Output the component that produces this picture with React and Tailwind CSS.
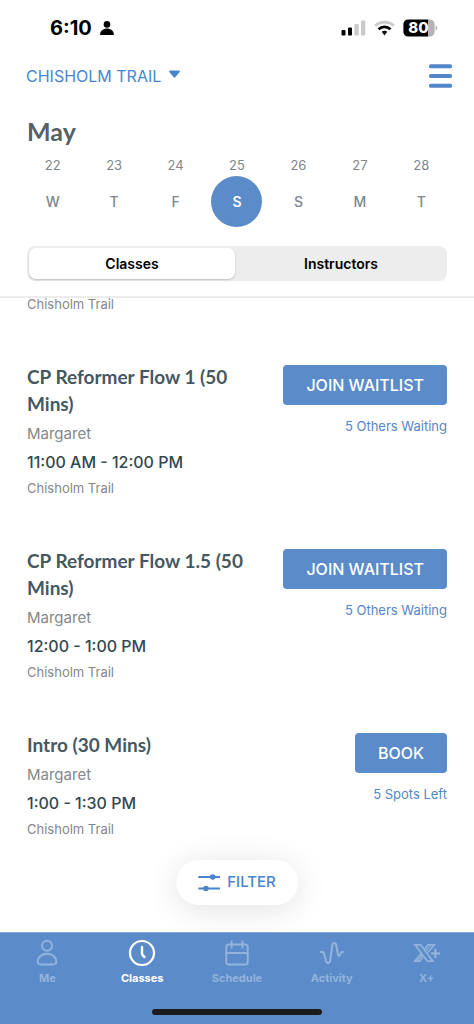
import React, { useState } from "react";

const days = [
  { date: 22, day: "W" },
  { date: 23, day: "T" },
  { date: 24, day: "F" },
  { date: 25, day: "S" },
  { date: 26, day: "S" },
  { date: 27, day: "M" },
  { date: 28, day: "T" },
];

const classes = [
  {
    title: "CP Reformer Flow 1 (50 Mins)",
    instructor: "Margaret",
    time: "11:00 AM - 12:00 PM",
    action: "JOIN WAITLIST",
    note: "5 Others Waiting",
  },
  {
    title: "CP Reformer Flow 1.5 (50 Mins)",
    instructor: "Margaret",
    time: "12:00 - 1:00 PM",
    action: "JOIN WAITLIST",
    note: "5 Others Waiting",
  },
  {
    title: "Intro (30 Mins)",
    instructor: "Margaret",
    time: "1:00 - 1:30 PM",
    action: "BOOK",
    note: "5 Spots Left",
  },
];

function StatusBar() {
  return (
    <div className="flex h-14 items-center justify-between pl-[50px] pr-9 text-black">
      <div className="flex items-center gap-2">
        <span className="text-[20px] leading-6 font-bold">6:10</span>
        <svg width="14" height="14" viewBox="0 0 14 14" fill="currentColor" aria-hidden="true">
          <circle cx="7" cy="3.4" r="3.3" />
          <path d="M1 14c-.7 0-1-.4-.9-1.100C.5 9.900 3.300 7.600 7 7.600s6.500 2.300 6.900 5.300c.1.700-.2 1.100-.9 1.100z" />
        </svg>
      </div>
      <div className="flex items-center gap-2">
        <svg width="25" height="16" viewBox="0 0 25 16" aria-hidden="true">
          <rect x="0.500" y="10" width="4" height="5.500" rx="1" />
          <rect x="7" y="7.500" width="4" height="8" rx="1" />
          <rect x="13.500" y="4" width="4.200" height="11.500" rx="1" fill="#cacaca" />
          <rect x="20" y="0.500" width="4.300" height="15" rx="1" fill="#cacaca" />
        </svg>
        <svg width="21" height="16" viewBox="0 0 21 16" fill="none" strokeWidth="2.700" aria-hidden="true">
          <path d="M1.200 5.700C6.400.900 14.600.900 19.800 5.700" stroke="#cacaca" />
          <path d="M4.500 9.300c3.400-3.200 8.600-3.200 12 0" stroke="#000" />
          <path d="M7.800 11.800c1.500-1.500 3.900-1.500 5.400 0L10.500 15.600z" fill="#000" />
        </svg>
        <svg width="35" height="18" viewBox="0 0 35 18" aria-hidden="true">
          <path d="M5 .500h20.300v17H5a4.600 4.600 0 0 1-4.600-4.600V5.100A4.600 4.600 0 0 1 5 .500z" />
          <path d="M25.300.500H27a4.600 4.600 0 0 1 4.600 4.600v7.800a4.600 4.600 0 0 1-4.600 4.600h-1.700z" fill="#b4b4b4" />
          <path d="M32.600 6.500c2.300 1 2.300 4 0 5z" fill="#b4b4b4" />
          <text x="15.500" y="14.400" textAnchor="middle" fontSize="15" fontWeight="800" fill="#fff">
            80
          </text>
        </svg>
      </div>
    </div>
  );
}

function WeekPicker({ selected, onSelect }) {
  return (
    <div className="grid grid-cols-7 px-[22px]">
      {days.map(({ date, day }) => (
        <button
          key={date}
          type="button"
          aria-pressed={selected === date}
          onClick={() => onSelect(date)}
          className="flex flex-col items-center gap-px text-[#80868c]"
        >
          <span className="text-[13px] leading-5">{date}</span>
          <span
            className={
              selected === date
                ? "flex size-[51px] items-center justify-center rounded-full bg-[#5b8cc9] text-[14px] font-semibold text-white"
                : "flex size-[51px] items-center justify-center text-[14px] font-medium"
            }
          >
            {day}
          </span>
        </button>
      ))}
    </div>
  );
}

function Segments({ value, onChange }) {
  return (
    <div className="mx-[27px] mt-[19px] grid h-[35px] grid-cols-[206fr_212fr] rounded-lg bg-[#ededee] py-[2px] pl-[2px]">
      {["Classes", "Instructors"].map((name) => (
        <button
          key={name}
          type="button"
          aria-pressed={value === name}
          onClick={() => onChange(name)}
          className={
            value === name
              ? "rounded-[7px] bg-white text-[14px] font-semibold text-black shadow-[0_1px_2px_rgba(0,0,0,0.2)]"
              : "rounded-[7px] text-[14px] font-semibold text-black"
          }
        >
          {name}
        </button>
      ))}
    </div>
  );
}

function ClassRow({ item }) {
  return (
    <li className="flex items-start justify-between">
      <div className="w-[230px]">
        <h2 className="font-['Lato'] text-[19px] leading-[27px] font-bold text-[#465860]">{item.title}</h2>
        <p className="mt-[3px] text-[15px] leading-7 text-[#84878c]">{item.instructor}</p>
        <p className="text-[16px] leading-7 font-medium text-[#334851]">{item.time}</p>
        <p className="text-[13px] leading-6 text-[#84878c]">Chisholm Trail</p>
      </div>
      <div className="mt-[2px] flex shrink-0 flex-col items-end gap-[11px]">
        <button type="button" className="h-10 rounded-[4px] bg-[#5b8cc9] px-[23px] text-[16px] font-medium text-white">
          {item.action}
        </button>
        <p className="text-[13px] leading-5 text-[#5586c6]">{item.note}</p>
      </div>
    </li>
  );
}

const iconProps = {
  width: 28,
  height: 28,
  viewBox: "0 0 28 28",
  fill: "none",
  stroke: "currentColor",
  strokeWidth: 2,
  strokeLinecap: "round",
  strokeLinejoin: "round",
  "aria-hidden": true,
};

const tabs = [
  {
    name: "Me",
    icon: (
      <svg {...iconProps}>
        <circle cx="14" cy="6.800" r="5" />
        <path d="M8 25.500c-2.300 0-3.500-1.200-3.300-3.300.400-4.500 4.500-7.500 9.300-7.500s8.900 3 9.300 7.500c.2 2.100-1 3.300-3.300 3.300z" />
      </svg>
    ),
  },
  {
    name: "Classes",
    icon: (
      <svg {...iconProps}>
        <circle cx="14" cy="14" r="12" strokeWidth="2.200" />
        <path d="M14 8v6.500c0 .8.300 1.400.9 2l1.600 1.500" strokeWidth="2.400" />
      </svg>
    ),
  },
  {
    name: "Schedule",
    icon: (
      <svg {...iconProps}>
        <rect x="3.300" y="5.500" width="21.400" height="20" rx="2.500" />
        <path d="M3.300 14h21.400M8.600 2.300v6.500M19.400 2.300v6.500" />
      </svg>
    ),
  },
  {
    name: "Activity",
    icon: (
      <svg {...iconProps}>
        <path d="M2.500 13h1.800c1 0 1.500.5 1.800 1.500l1.800 7.300c.8 3 3.600 3 4.200 0L14.300 6.300c.6-3 3.400-3 4 0l1.600 9c.400 2 1.600 2.200 2.400.4l.8-1.900c.3-.5.7-.8 1.300-.8h.8" />
      </svg>
    ),
  },
  {
    name: "X+",
    icon: (
      <svg {...iconProps} strokeWidth="1.700" strokeLinecap="butt" strokeLinejoin="miter">
        <path d="M2.200 5.800H7.700L19.900 22.200H14.400z" />
        <path d="M11.800 9.800 15 5.800h6.200L14.900 13.200M9.900 17.900 6.600 22.200H1.700L8 14.600" />
        <path d="M13 11.600 17.500 6.400M9 16 4.300 21.600" strokeWidth="1.200" />
        <path d="M22.500 9.800v9M18 14.300h9" strokeWidth="2.300" />
      </svg>
    ),
  },
];

function TabBar() {
  return (
    <nav className="sticky bottom-0 z-10 border-t border-[#80a6d6] bg-[#5b8cc9] pt-[6px] pb-[10px]">
      <div className="grid grid-cols-5">
        {tabs.map(({ name, icon }) => (
          <a
            key={name}
            href={"#" + name.toLowerCase()}
            aria-current={name === "Classes" ? "page" : undefined}
            className={
              name === "Classes"
                ? "flex flex-col items-center gap-[3px] text-white"
                : "flex flex-col items-center gap-[3px] text-[#92b3dc]"
            }
          >
            {icon}
            <span className="text-[11px] leading-4 font-bold">{name}</span>
          </a>
        ))}
      </div>
      <div className="mx-auto mt-[23px] h-[6px] w-[170px] rounded-full bg-[#1c1c1e]" />
    </nav>
  );
}

export default function App() {
  const [selected, setSelected] = useState(25);
  const [segment, setSegment] = useState("Classes");

  return (
    <div className="flex min-h-dvh flex-col bg-white font-['Inter','Liberation_Sans',sans-serif]">
      <header className="sticky top-0 z-10 border-b-2 border-[#ececec] bg-white pb-[15px]">
        <StatusBar />
        <div className="flex h-10 items-center justify-between pr-[22px] pl-[26px]">
          <button type="button" className="flex items-center gap-2 text-[16px] text-[#4a86cb]">
            CHISHOLM TRAIL
            <svg width="11" height="8" viewBox="0 0 11 8" fill="currentColor" className="mb-1" aria-hidden="true">
              <path d="M1 .500h9c.9 0 1.200.7.700 1.400L6.500 7c-.6.700-1.400.7-2 0L.3 1.900C-.2 1.200.1.500 1 .500z" />
            </svg>
          </button>
          <button type="button" aria-label="Menu" className="text-[#5389cc]">
            <svg width="23" height="24" viewBox="0 0 23 24" fill="currentColor" aria-hidden="true">
              <rect y="0.200" width="23" height="4" rx="1.500" />
              <rect y="10" width="23" height="4" rx="1.500" />
              <rect y="19.800" width="23" height="4" rx="1.500" />
            </svg>
          </button>
        </div>
        <h1 className="mt-[19px] mb-2 pl-[27px] font-['Lato'] text-[25px] leading-8 font-bold text-[#536169]">May</h1>
        <WeekPicker selected={selected} onSelect={setSelected} />
        <Segments value={segment} onChange={setSegment} />
      </header>

      <main className="relative flex-1 px-[27px] pb-[91px]">
        <p className="-mt-[6px] text-[13px] leading-6 text-[#84878c]">Chisholm Trail</p>
        <ul className="mt-[47px] flex flex-col gap-[47px]">
          {classes.map((item) => (
            <ClassRow key={item.title} item={item} />
          ))}
        </ul>
        <button
          type="button"
          className="absolute bottom-[27px] left-1/2 flex h-[45px] -translate-x-1/2 items-center gap-[7px] rounded-full bg-white px-[22px] text-[15px] font-medium text-[#4a84ca] shadow-[0_4px_32px_rgba(0,0,0,0.12)]"
        >
          <svg width="22" height="20" viewBox="0 0 22 20" fill="currentColor" aria-hidden="true">
            <path d="M0 3.100h22v1.900H0zM0 14.600h22v1.900H0z" />
            <circle cx="14.500" cy="4" r="2.800" />
            <circle cx="7.700" cy="15.500" r="2.800" />
          </svg>
          FILTER
        </button>
      </main>
      <TabBar />
    </div>
  );
}
